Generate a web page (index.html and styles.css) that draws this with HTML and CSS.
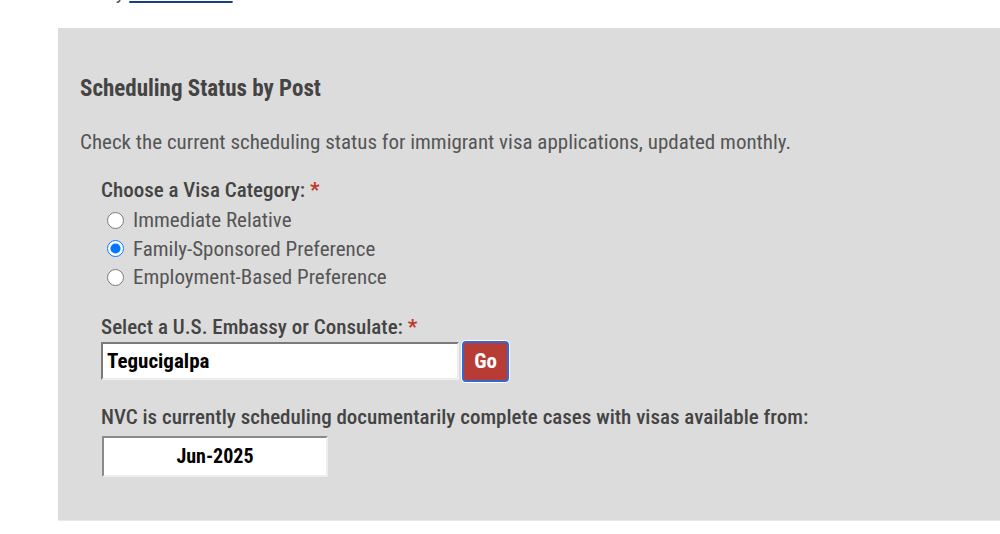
FILE: index.html
```html
<!DOCTYPE html>
<html lang="en">

<head>
    <meta charset="UTF-8">
    <meta name="viewport" content="width=device-width, initial-scale=1.0">
    <title>Scheduling Status by Post</title>
    <link rel="stylesheet" href="styles.css">
</head>

<body>

    <p class="intro">monthly <a href="#">Visa Bulletin</a>.</p>

    <section class="status-box">
        <h2>Scheduling Status by Post</h2>
        <p class="lead">Check the current scheduling status for immigrant visa applications, updated monthly.</p>

        <form class="status-form">
            <div class="category" role="radiogroup" aria-labelledby="category-label">
                <div id="category-label" class="field-label">Choose a Visa Category: <span class="req">*</span></div>
                <label class="radio"><input type="radio" name="category" value="ir"> Immediate Relative</label>
                <label class="radio"><input type="radio" name="category" value="fs" checked> Family-Sponsored Preference</label>
                <label class="radio"><input type="radio" name="category" value="eb"> Employment-Based Preference</label>
            </div>

            <div class="post">
                <label for="post" class="field-label">Select a U.S. Embassy or Consulate: <span class="req">*</span></label>
                <div class="post-row">
                    <input type="text" id="post" value="Tegucigalpa">
                    <button type="button" class="go">Go</button>
                </div>
            </div>

            <div class="result">
                <p class="field-label">NVC is currently scheduling documentarily complete cases with visas available from:</p>
                <div class="result-date">Jun-2025</div>
            </div>
        </form>
    </section>

</body>

</html>
```

FILE: styles.css
```css
body {
    font-family: Roboto, "Liberation Sans", sans-serif;
    font-stretch: condensed;
    background-color: #fff;
    color: #555;
    margin: 0;
    padding: 0 0 0 58px;
}

.intro {
    margin: -20px 0 0 0;
    font-size: 21px;
    line-height: 24px;
    color: #555;
}

.intro a {
    color: #1a3e8c;
}

.status-box {
    margin-top: 24px;
    background-color: #dcdcdc;
    padding: 47px 22px 43px 22px;
    border-bottom: 1px solid #e8e8e8;
}

h2 {
    margin: 0;
    font-size: 23px;
    line-height: 28px;
    font-weight: 700;
    color: #444;
}

.lead {
    margin: 26px 0 0 0;
    font-size: 21px;
    line-height: 26px;
    color: #555;
}

.status-form {
    padding-left: 21px;
}

.category {
    margin-top: 22px;
}

.category .field-label {
    margin-bottom: 3px;
}

.req {
    color: #c0392b;
    font-weight: 700;
}

.radio {
    display: flex;
    align-items: center;
    gap: 9px;
    font-size: 21px;
    color: #555;
    height: 28.5px;
}

.radio input {
    margin: 0 0 0 6px;
    width: 17px;
    height: 17px;
}

.post {
    margin-top: 22px;
}

.field-label {
    display: block;
    margin: 0 0 1px 0;
    font-size: 21px;
    line-height: 26px;
    font-weight: 500;
    color: #444;
}

.post-row {
    display: flex;
    align-items: center;
    gap: 3px;
}

.post-row input {
    width: 358px;
    height: 38px;
    box-sizing: border-box;
    border: 2px solid #eee;
    border-top-color: #7a7a7a;
    border-left-color: #7a7a7a;
    padding: 0 4px;
    font-family: inherit;
    font-stretch: condensed;
    font-size: 21px;
    font-weight: 700;
    color: #000;
    background: #fff;
}

.go {
    width: 47px;
    height: 41px;
    box-sizing: border-box;
    background-color: #b83c36;
    color: #fff;
    border: 2px solid #3567d3;
    border-radius: 4px;
    box-shadow: 0 0 0 1px #fff;
    font-family: inherit;
    font-stretch: condensed;
    font-size: 21px;
    font-weight: 700;
    cursor: pointer;
}

.result {
    margin-top: 22px;
}

.result .field-label {
    margin-bottom: 6px;
}

.result-date {
    width: 226px;
    height: 41px;
    box-sizing: border-box;
    margin-left: 1px;
    border: 2px solid #eee;
    border-top-color: #8a8a8a;
    border-left-color: #8a8a8a;
    background: #fff;
    display: flex;
    align-items: center;
    justify-content: center;
    font-size: 20px;
    font-weight: 700;
    color: #000;
}
```
